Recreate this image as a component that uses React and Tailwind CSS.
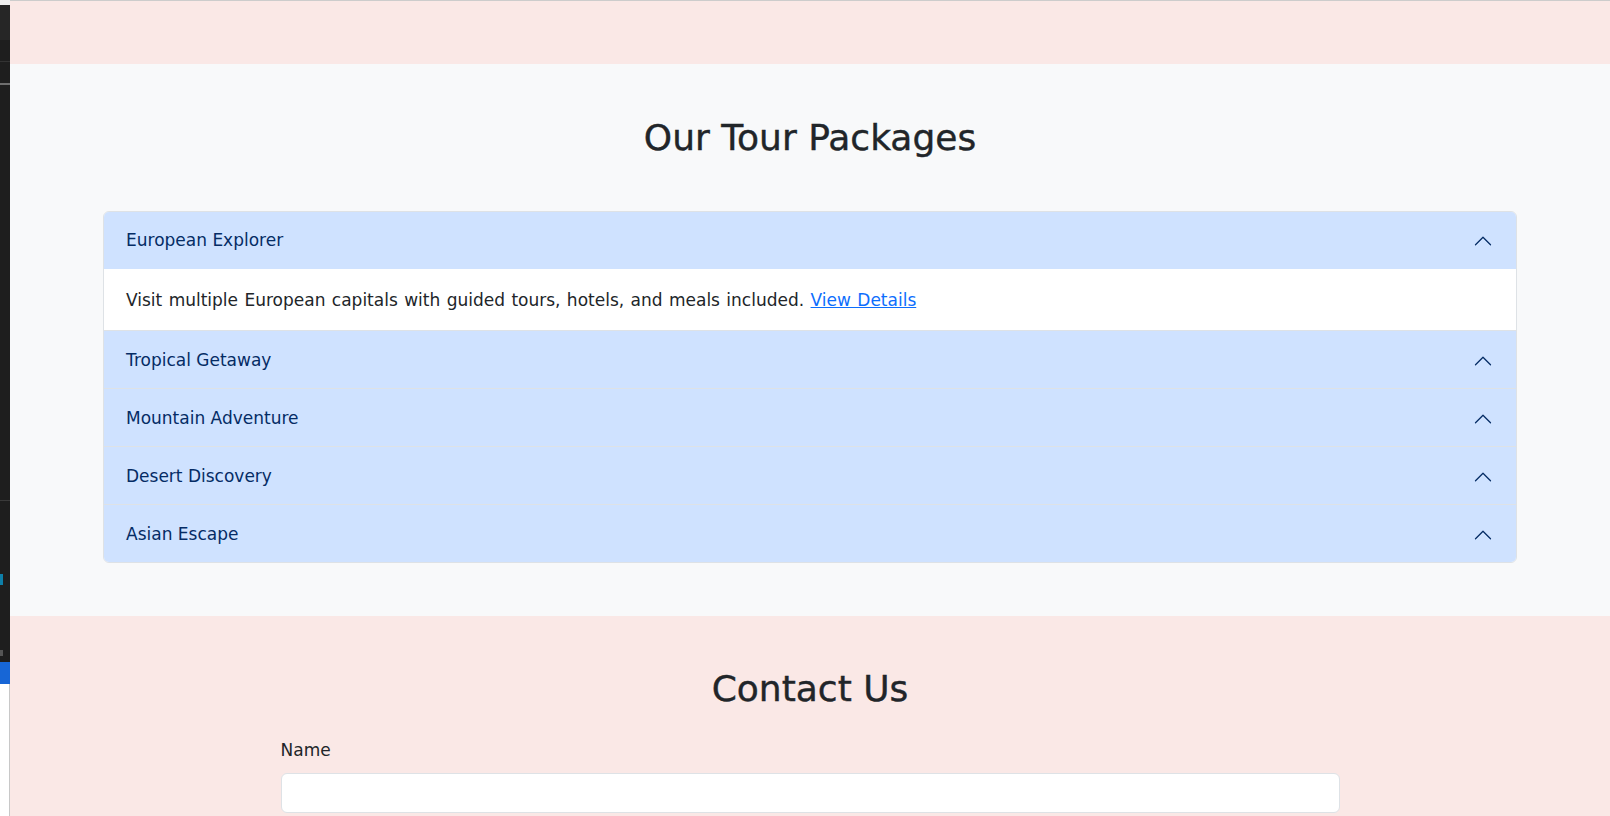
import { useState } from "react"

const packages = [
  {
    title: "European Explorer",
    text: "Visit multiple European capitals with guided tours, hotels, and meals included.",
  },
  { title: "Tropical Getaway", text: "Relax on white sand beaches with all-inclusive resorts." },
  { title: "Mountain Adventure", text: "Hike scenic trails and stay in cozy mountain lodges." },
  { title: "Desert Discovery", text: "Explore dunes, oases and ancient cities with local guides." },
  { title: "Asian Escape", text: "Discover temples, markets and cuisine across Asia." },
]

const font = { fontFamily: '"DejaVu Sans", "Noto Sans", sans-serif' }

function Chevron() {
  return (
    <svg viewBox="0 0 16 16" className="w-5 h-5 shrink-0" fill="none" stroke="#052c65" strokeLinecap="round" strokeLinejoin="round">
      <path d="M2 11L8 5L14 11" />
    </svg>
  )
}

function EditorStrip() {
  return (
    <div className="w-[10px] shrink-0 flex flex-col">
      <div className="h-[5px] bg-[#f0f0f0]" />
      <div className="h-[35px] bg-[#262626]" />
      <div className="h-[22px] bg-[#1e1e1e] border-b border-[#333333]" />
      <div className="h-[23px] bg-[#1e1e1e] border-b-2 border-[#6e6e6e]" />
      <div className="h-[416px] bg-[#1e1e1e] border-b border-[#3a3a3a]" />
      <div className="h-[161px] bg-[#1e1e1e] flex flex-col">
        <div className="h-[73px]" />
        <div className="w-[3px] h-[11px] bg-[#0e7fa8]" />
        <div className="h-[65px]" />
        <div className="w-[3px] h-[6px] bg-[#555555]" />
      </div>
      <div className="h-[22px] bg-[#1766d6]" />
      <div className="flex-1 bg-white border-r border-[#c8c8c8]" />
    </div>
  )
}

export default function App() {
  const [open, setOpen] = useState(0)

  return (
    <div className="flex min-h-[816px] text-[#212529]" style={font}>
      <EditorStrip />

      <div className="flex-1 flex flex-col border-t border-[#cccccc]">
        {/* top band */}
        <div className="h-[63px] bg-[#fae8e6]" />

        {/* packages */}
        <section className="bg-[#f8f9fa] pt-[52px] pb-[53px] px-[93px]">
          <h2 className="text-center text-[36px] leading-[1.2] mb-[52px] [-webkit-text-stroke:0.4px_#212529]">
            Our Tour Packages
          </h2>

          <div className="rounded-md border border-[#dee2e6] overflow-hidden">
            {packages.map((p, i) => (
              <div key={p.title} className={i < packages.length - 1 ? "border-b border-[#dee2e6]" : ""}>
                <button
                  onClick={() => setOpen(open === i ? -1 : i)}
                  className={`w-full h-[57px] pl-[22px] pr-[23px] flex items-center justify-between bg-[#cfe2ff] text-[#052c65] text-[17px] text-left ${
                    i === 0 ? "pt-0" : "pt-[2px]"
                  }`}
                >
                  <span>{p.title}</span>
                  <Chevron />
                </button>
                {open === i && (
                  <div className="h-[61px] pl-[22px] pr-5 pt-[3px] flex items-center bg-white text-[17px] [word-spacing:1px]">
                    <p>
                      {p.text}{" "}
                      <a href="#" className="text-[#0d6efd] underline">View Details</a>
                    </p>
                  </div>
                )}
              </div>
            ))}
          </div>
        </section>

        {/* contact */}
        <section className="flex-1 bg-[#fae8e6] pt-[51px] pb-12">
          <h2 className="text-center text-[36px] leading-[1.2] mb-[28px] [-webkit-text-stroke:0.4px_#212529]">
            Contact Us
          </h2>
          <form className="w-[1059px] mx-auto">
            <label className="block text-[17px] leading-6 mb-[11px]">Name</label>
            <input
              type="text"
              className="w-full h-10 px-3 bg-white border border-[#dee2e6] rounded-md outline-none"
            />
          </form>
        </section>
      </div>
    </div>
  )
}
